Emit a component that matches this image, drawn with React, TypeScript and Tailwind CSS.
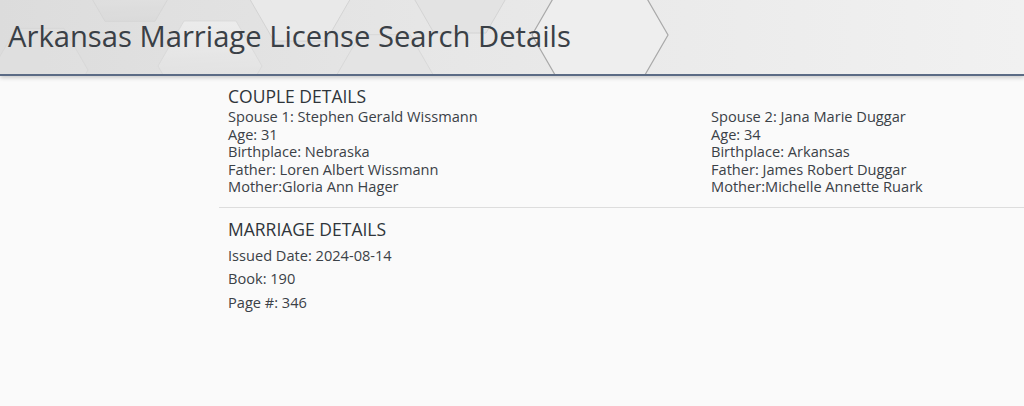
import React from 'react';

const spouses = [
  {
    label: 'Spouse 1',
    name: 'Stephen Gerald Wissmann',
    age: '31',
    birthplace: 'Nebraska',
    father: 'Loren Albert Wissmann',
    mother: 'Gloria Ann Hager',
  },
  {
    label: 'Spouse 2',
    name: 'Jana Marie Duggar',
    age: '34',
    birthplace: 'Arkansas',
    father: 'James Robert Duggar',
    mother: 'Michelle Annette Ruark',
  },
];

// flat-topped hexagon outline, centred on (cx, cy), radius r
function hex(cx: number, cy: number, r: number) {
  const h = (r * Math.sqrt(3)) / 2;
  return `M${cx - r},${cy} L${cx - r / 2},${cy - h} L${cx + r / 2},${cy - h} L${cx + r},${cy} L${cx + r / 2},${cy + h} L${cx - r / 2},${cy + h} Z`;
}

function HexBackground() {
  return (
    <svg className="absolute inset-0 h-full w-full" viewBox="0 0 1024 74" preserveAspectRatio="none">
      <defs>
        <linearGradient id="hdr" x1="0" y1="0" x2="1" y2="0">
          <stop offset="0" stopColor="#dcdcdc" />
          <stop offset="0.45" stopColor="#e7e7e7" />
          <stop offset="1" stopColor="#f1f1f1" />
        </linearGradient>
        <linearGradient id="cell" x1="0" y1="0" x2="0" y2="1">
          <stop offset="0" stopColor="#f4f4f4" />
          <stop offset="1" stopColor="#d9d9d9" />
        </linearGradient>
      </defs>
      <rect width="1024" height="74" fill="url(#hdr)" />
      <path d={hex(40, 70, 48)} fill="#e1e1e1" stroke="#d6d6d6" strokeWidth="1" opacity="0.7" />
      <path d={hex(130, -22, 50)} fill="url(#cell)" stroke="#d2d2d2" strokeWidth="1" opacity="0.7" />
      <path d={hex(210, 66, 52)} fill="url(#cell)" stroke="#d6d6d6" strokeWidth="1" opacity="0.6" />
      <path d={hex(300, -4, 52)} fill="#ebebeb" stroke="#d0d0d0" strokeWidth="1" opacity="0.8" />
      <path d={hex(385, 78, 50)} fill="#e4e4e4" stroke="#d3d3d3" strokeWidth="1" opacity="0.7" />
      <path d={hex(460, -12, 52)} fill="#e2e2e2" stroke="#cccccc" strokeWidth="1" opacity="0.7" />
      <path d={hex(600, 35, 68)} fill="#eeeeee" stroke="#a9a9a9" strokeWidth="1.2" />
    </svg>
  );
}

export default function App() {
  return (
    <div className="min-h-[406px] overflow-hidden bg-[#fafafa] text-[#333a40]" style={{ fontFamily: '"Open Sans", "Noto Sans", sans-serif' }}>
      <header className="relative h-[76px] overflow-hidden border-b-2 border-[#5b6b85] shadow-[0_2px_4px_rgba(0,0,0,0.18)]">
        <HexBackground />
        <h1 className="relative pl-[8px] pt-[16px] text-[29.2px] leading-[40px] text-[#3a4046]">
          Arkansas Marriage License Search Details
        </h1>
      </header>

      <main className="ml-[219px]">
        <section className="px-[9px] pt-[9px] pb-[11px]">
          <h2 className="text-[17.5px] leading-[22px] text-[#2f353a]">COUPLE DETAILS</h2>
          <div className="mt-[1px] flex text-[14.6px] leading-[17.6px] text-[#3b4147]">
            {spouses.map((s) => (
              <div key={s.label} className="w-[483px] shrink-0 last:w-auto last:flex-1">
                <div>{s.label}: {s.name}</div>
                <div>Age: {s.age}</div>
                <div>Birthplace: {s.birthplace}</div>
                <div>Father: {s.father}</div>
                <div>Mother:{s.mother}</div>
              </div>
            ))}
          </div>
        </section>
        <div className="border-t border-[#dddddd]" />
        <section className="px-[9px] pt-[10px]">
          <h2 className="mb-[4px] text-[17.5px] leading-[22px] text-[#2f353a]">MARRIAGE DETAILS</h2>
          <div className="text-[14.6px] leading-[23.5px] text-[#3b4147]">
            <div>Issued Date: 2024-08-14</div>
            <div>Book: 190</div>
            <div>Page #: 346</div>
          </div>
        </section>
      </main>
    </div>
  );
}
